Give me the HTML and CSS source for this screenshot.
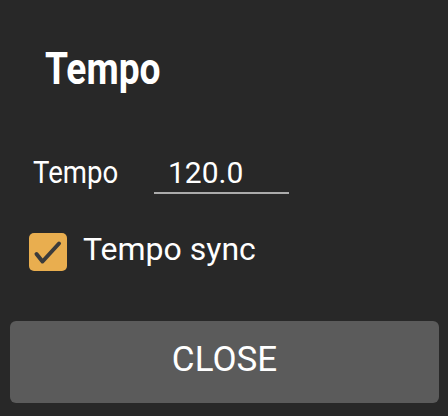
FILE: index.html
```html
<!DOCTYPE html>
<html>
<head>
<meta charset="utf-8">
<link rel="stylesheet" href="styles.css">
</head>
<body>
<div class="dialog">
  <div class="title"><span class="squeeze title-text">Tempo</span></div>
  <div class="field-row">
    <div class="field-label"><span class="squeeze label-text">Tempo</span></div>
    <div class="field-input">120.0</div>
  </div>
  <div class="check-row">
    <div class="checkbox">
      <svg width="38" height="38" viewBox="0 0 38 38"><path d="M7.5 21 L13.5 28.5 L30 10.5" fill="none" stroke="#3b3b3b" stroke-width="4" stroke-linecap="round" stroke-linejoin="round"/></svg>
    </div>
    <div class="check-text">Tempo sync</div>
  </div>
  <div class="button">CLOSE</div>
</div>
</body>
</html>
```
FILE: styles.css
```css
html, body {
  margin: 0;
  padding: 0;
  background: #282828;
}
body {
  width: 448px;
  height: 416px;
  overflow: hidden;
  font-family: Roboto, "Liberation Sans", sans-serif;
  color: #ffffff;
}
.dialog {
  display: flex;
  flex-direction: column;
}
.squeeze {
  display: inline-block;
  transform-origin: left center;
  white-space: nowrap;
}
.title {
  margin-top: 47px;
  padding-left: 45px;
  font-size: 44px;
  line-height: 44px;
  font-weight: 700;
  height: 44px;
}
.title-text {
  transform: scaleX(0.845);
}
.field-row {
  margin-top: 63px;
  display: flex;
  align-items: flex-start;
  padding-left: 33px;
}
.field-label {
  width: 121px;
  font-size: 31px;
  line-height: 38px;
}
.label-text {
  transform: scaleX(0.89);
}
.field-input {
  width: 135px;
  box-sizing: border-box;
  padding-left: 14px;
  font-size: 30px;
  line-height: 38px;
  border-bottom: 2px solid #ababab;
}
.check-row {
  margin-top: 39px;
  display: flex;
  align-items: flex-start;
  padding-left: 29px;
}
.checkbox {
  width: 38px;
  height: 38px;
  border-radius: 5px;
  background: #e9ae4f;
  display: flex;
}
.check-text {
  margin-left: 16px;
  margin-top: -3px;
  font-size: 32px;
  line-height: 38px;
}
.button {
  margin: 50px 9px 0 10px;
  height: 82px;
  border-radius: 6px;
  background: #5b5b5b;
  display: flex;
  align-items: center;
  justify-content: center;
  font-size: 35px;
  padding-bottom: 5px;
  box-sizing: border-box;
}
```
